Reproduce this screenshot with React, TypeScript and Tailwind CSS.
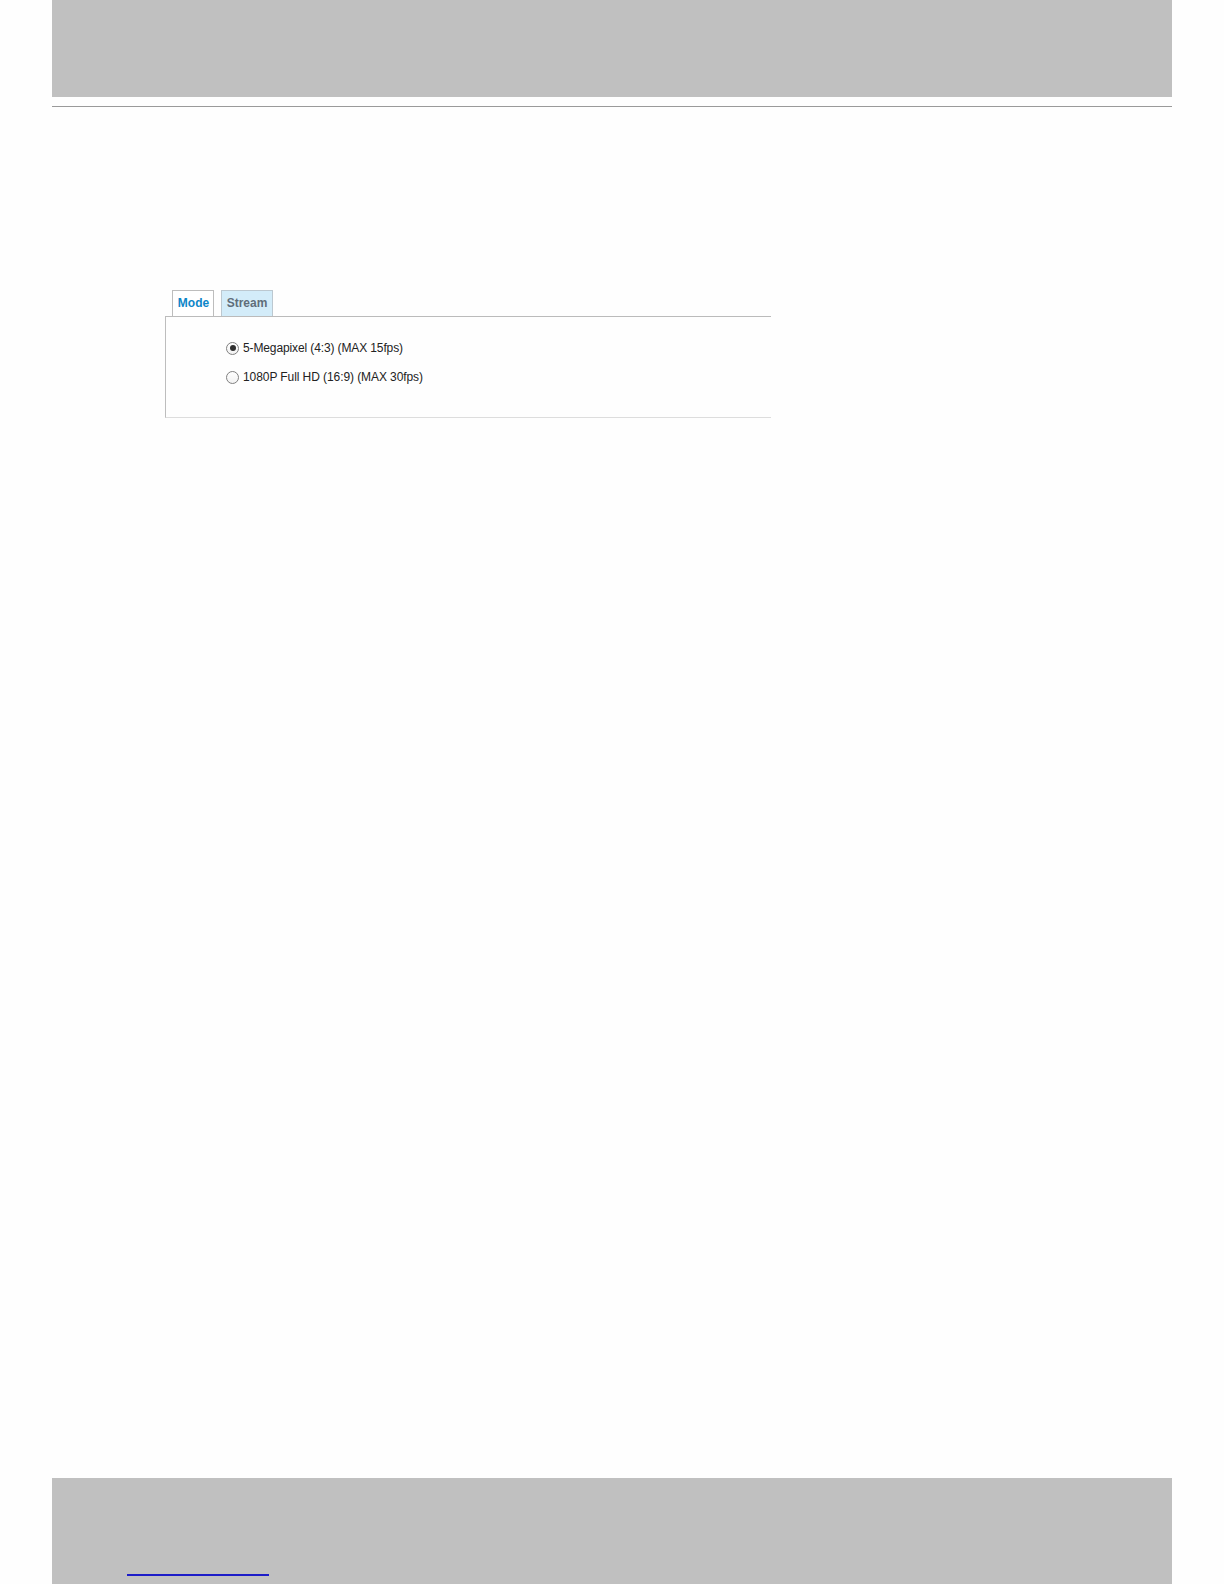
import React from "react";

function Radio({ checked }: { checked?: boolean }) {
  return (
    <span className="relative flex h-[13px] w-[13px] items-center justify-center rounded-full border border-[#808080] bg-gradient-to-b from-[#ffffff] to-[#f2f2f2]">
      {checked && <span className="h-[6px] w-[6px] rounded-full bg-[#2f2f2f]" />}
    </span>
  );
}

export default function App() {
  return (
    <div className="flex min-h-[1584px] w-[1224px] flex-col bg-[#fefefe] font-['Liberation_Sans',Arial,sans-serif]">
      <div className="ml-[52px] h-[97px] w-[1120px] bg-[#c0c0c0]" />
      <div className="ml-[52px] mt-[9px] h-px w-[1120px] bg-[#9a9a9a]" />

      <div className="ml-[165px] mt-[183px] w-[606px]">
        <div className="flex gap-[7px] pl-[7px]">
          <div className="flex h-[26px] w-[42px] items-center justify-center border border-b-0 border-[#bdbdbd] bg-white pb-[2px] pl-[1px] text-[12px] font-bold text-[#0d86c8]">
            Mode
          </div>
          <div className="flex h-[26px] w-[52px] items-center justify-center border border-b-0 border-[#bcc8d0] bg-[#d3ecf9] pb-[2px] text-[12px] font-bold text-[#5f6e7a]">
            Stream
          </div>
        </div>
        <div className="flex flex-col gap-[13px] border-t border-l border-b border-t-[#bbbbbb] border-l-[#bdbdbd] border-b-[#dddddd] pl-[60px] pt-[23px] pb-[32px]">
          <label className="flex h-[16px] items-center gap-[4px] text-[12px] tracking-[-0.12px] text-[#222222]">
            <Radio checked />
            <span>5-Megapixel (4:3) (MAX 15fps)</span>
          </label>
          <label className="flex h-[16px] items-center gap-[4px] text-[12px] tracking-[-0.08px] text-[#222222]">
            <Radio />
            <span>1080P Full HD (16:9) (MAX 30fps)</span>
          </label>
        </div>
      </div>

      <div className="mt-auto ml-[52px] h-[106px] w-[1120px] bg-[#c0c0c0] pt-[96px] pl-[75px]">
        <div className="h-[2px] w-[142px] bg-[#1c1cc8]" />
      </div>
    </div>
  );
}
